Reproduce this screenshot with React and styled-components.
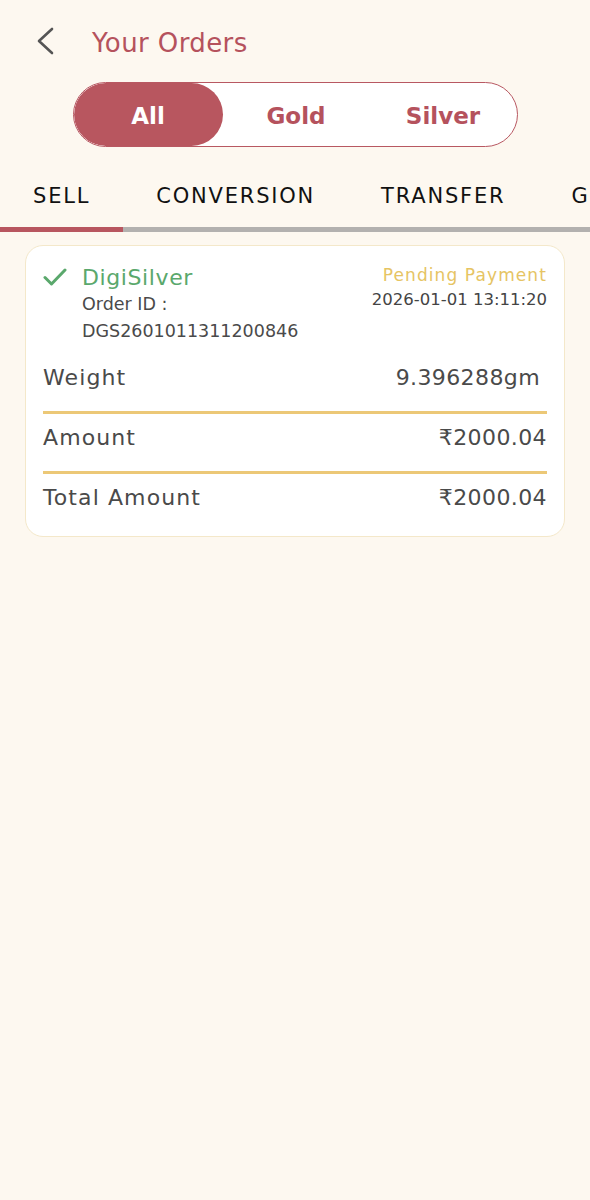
import React from "react";
import styled, { createGlobalStyle } from "styled-components";

const GlobalStyle = createGlobalStyle`
  html, body { margin: 0; padding: 0; background: #fdf8f0; }
  body { font-family: "DejaVu Sans", "Noto Sans", sans-serif; }
  * { box-sizing: border-box; }
`;

const Page = styled.div`
  width: 590px;
  min-height: 1200px;
  background: #fdf8f0;
  overflow: hidden;
`;

const Header = styled.header`
  display: flex;
  align-items: center;
  height: 82px;
  padding-left: 33px;
  gap: 35px;
`;

const BackButton = styled.button`
  border: 0;
  background: none;
  padding: 0;
  display: flex;
  width: 24px;
  height: 30px;
  align-items: center;
  justify-content: center;
`;

const Title = styled.h1`
  margin: 3px 0 0;
  font-size: 26px;
  font-weight: 400;
  letter-spacing: 0.4px;
  color: #b5525d;
`;

const Segment = styled.div`
  width: 445px;
  height: 65px;
  margin: 0 auto;
  display: grid;
  grid-template-columns: 149px 1fr 1fr;
  border: 1.5px solid #b85862;
  border-radius: 33px;
  background: #fff;
  overflow: hidden;
`;

const SegItem = styled.div`
  display: flex;
  align-items: center;
  justify-content: center;
  padding-top: 2px;
  font-size: 23px;
  font-weight: 700;
  border-radius: 33px;
  color: ${(p) => (p.$active ? "#fff" : "#b5525d")};
  background: ${(p) => (p.$active ? "#b8565f" : "transparent")};
`;

const Tabs = styled.div`
  margin-top: 25px;
  display: flex;
  white-space: nowrap;
  border-bottom: 5px solid #b3b1af;
`;

const Tab = styled.div`
  flex: none;
  position: relative;
  padding: 12px 33px 19px;
  font-size: 21px;
  line-height: 24px;
  letter-spacing: 1.8px;
  color: #111;
  &::after {
    content: "";
    position: absolute;
    left: 0;
    right: 0;
    bottom: -5px;
    height: 5px;
    background: ${(p) => (p.$active ? "#b8565f" : "transparent")};
  }
`;

const Card = styled.div`
  margin: 13px 25px 0;
  background: #fff;
  border: 1.5px solid #f4e8ca;
  border-radius: 18px;
  padding: 19px 17px 5px;
`;

const Top = styled.div`
  display: flex;
  justify-content: space-between;
  align-items: flex-start;
`;

const Product = styled.div`
  display: flex;
  gap: 15px;
`;

const Check = styled.div`
  padding-top: 3px;
`;

const ProductInfo = styled.div`
  display: flex;
  flex-direction: column;
`;

const ProductName = styled.div`
  font-size: 22px;
  letter-spacing: 0.6px;
  color: #5aa86c;
  line-height: 26px;
`;

const OrderLine = styled.div`
  font-size: 17.5px;
  color: #4a4a4a;
  line-height: 27px;
`;

const Status = styled.div`
  display: flex;
  flex-direction: column;
  align-items: flex-end;
`;

const StatusText = styled.div`
  font-size: 17px;
  letter-spacing: 1.1px;
  color: #e6c463;
  line-height: 20px;
`;

const DateText = styled.div`
  font-size: 16.5px;
  color: #444;
  line-height: 30px;
`;

const Rows = styled.div`
  margin-top: 7px;
  display: flex;
  flex-direction: column;
`;

const Row = styled.div`
  display: flex;
  justify-content: space-between;
  align-items: center;
  padding: ${(p) => (p.$divider ? "10px" : "12px")} ${(p) => p.$pr || 0}px 19px 0;
  line-height: 28px;
  font-size: 22px;
  color: #4a4a4a;
  border-top: ${(p) => (p.$divider ? "3px solid #ecc877" : "none")};
`;

const Label = styled.span`
  letter-spacing: 1.1px;
`;

const Value = styled.span`
  letter-spacing: 0.4px;
`;

export default function App() {
  return (
    <Page>
      <GlobalStyle />
      <Header>
        <BackButton aria-label="Back">
          <svg width="20" height="28" viewBox="0 0 20 28" fill="none">
            <path d="M17 2 L4 14 L17 26" stroke="#555" strokeWidth="2.6" strokeLinecap="round" strokeLinejoin="round" />
          </svg>
        </BackButton>
        <Title>Your Orders</Title>
      </Header>
      <Segment>
        <SegItem $active>All</SegItem>
        <SegItem>Gold</SegItem>
        <SegItem>Silver</SegItem>
      </Segment>
      <Tabs>
        <Tab $active>SELL</Tab>
        <Tab>CONVERSION</Tab>
        <Tab>TRANSFER</Tab>
        <Tab>GIFT</Tab>
      </Tabs>
      <Card>
        <Top>
          <Product>
            <Check>
              <svg width="24" height="18" viewBox="0 0 24 18" fill="none">
                <path d="M2 9.5 L8.5 16 L22 2" stroke="#5aa86c" strokeWidth="3" strokeLinecap="round" strokeLinejoin="round" />
              </svg>
            </Check>
            <ProductInfo>
              <ProductName>DigiSilver</ProductName>
              <OrderLine>Order ID :</OrderLine>
              <OrderLine>DGS2601011311200846</OrderLine>
            </ProductInfo>
          </Product>
          <Status>
            <StatusText>Pending Payment</StatusText>
            <DateText>2026-01-01 13:11:20</DateText>
          </Status>
        </Top>
        <Rows>
          <Row $pr={7}>
            <Label>Weight</Label>
            <Value>9.396288gm</Value>
          </Row>
          <Row $divider>
            <Label>Amount</Label>
            <Value>₹2000.04</Value>
          </Row>
          <Row $divider>
            <Label>Total Amount</Label>
            <Value>₹2000.04</Value>
          </Row>
        </Rows>
      </Card>
    </Page>
  );
}
